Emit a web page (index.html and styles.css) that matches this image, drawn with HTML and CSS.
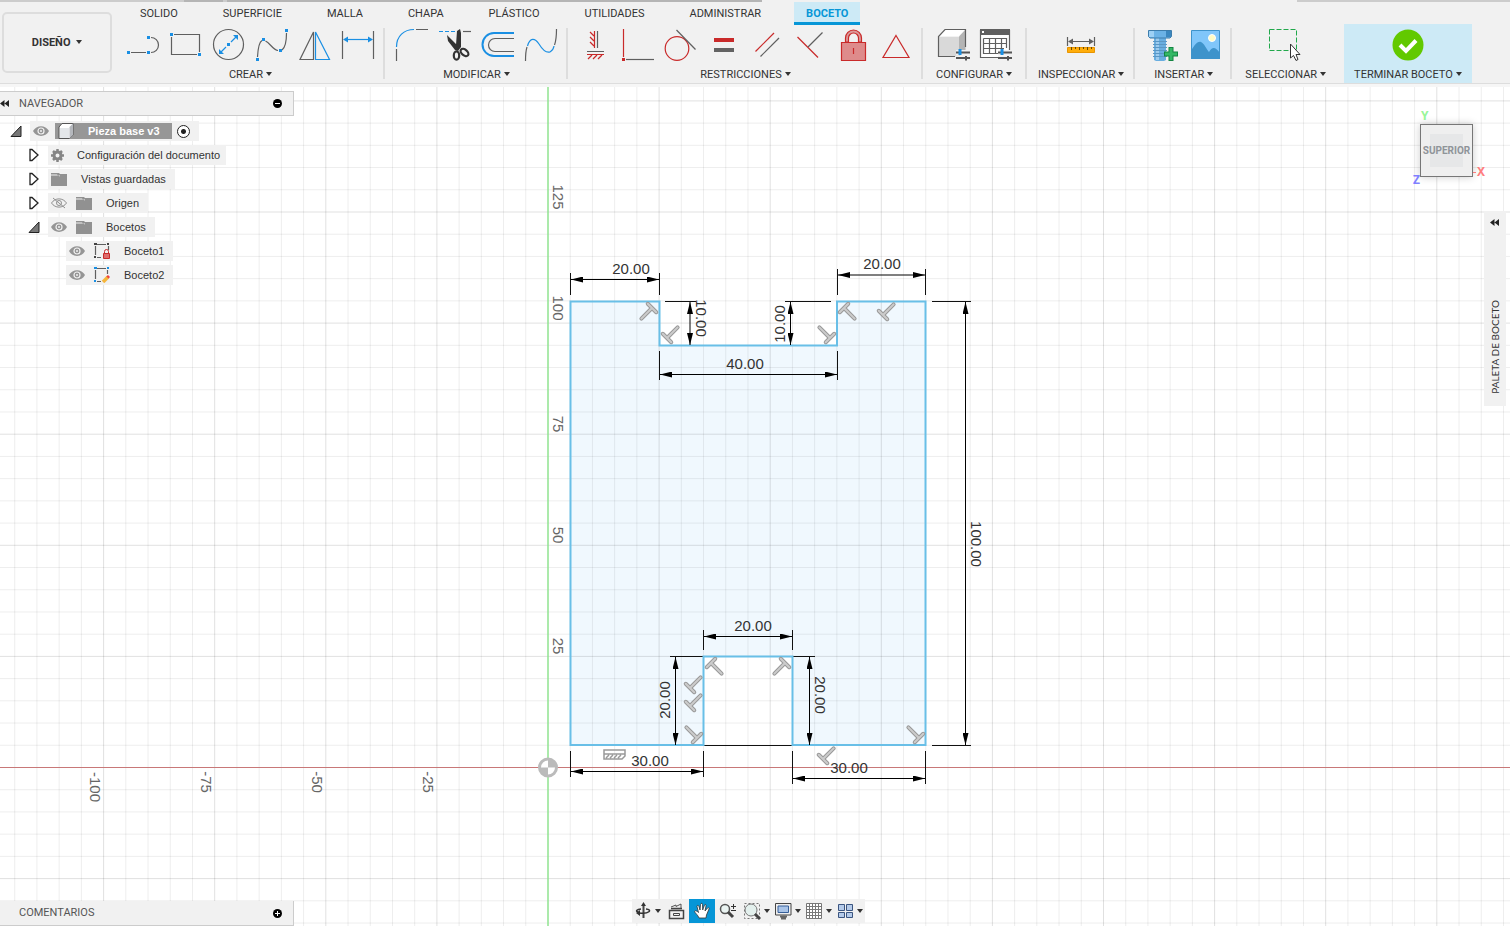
FILE: index.html
```html
<!DOCTYPE html>
<html lang="es">
<head>
<meta charset="utf-8">
<title>Pieza base v3</title>
<link rel="stylesheet" href="styles.css">
</head>
<body>
<svg class="canvas" role="img" aria-label="Boceto2">
  <defs>
    <marker id="arrow" markerUnits="userSpaceOnUse" markerWidth="12" markerHeight="6" refX="12" refY="3" orient="auto-start-reverse"><path d="M0 0L12 3L0 6Z"/></marker>
    <g id="perp">
      <path class="perp-edge" d="M-6 0H6M0 0V15"/>
      <path class="perp-core" d="M-6 0H6M0 0V15"/>
    </g>
  </defs>
  <path class="profile-fill" d="M570 301H659V345H837V301H926V745H792V656H704V745H570Z"/>
  <path id="grid-minor" class="grid-minor"/>
  <path id="grid-major" class="grid-major"/>
  <path id="axis-x" class="axis-x"/>
  <path id="axis-y" class="axis-y"/>
  <g class="ruler">
    <text transform="translate(553 197) rotate(90)">125</text>
    <text transform="translate(553 308) rotate(90)">100</text>
    <text transform="translate(553 424) rotate(90)">75</text>
    <text transform="translate(553 535) rotate(90)">50</text>
    <text transform="translate(553 646) rotate(90)">25</text>
    <text transform="translate(90 787) rotate(90)">-100</text>
    <text transform="translate(201 782) rotate(90)">-75</text>
    <text transform="translate(312 782) rotate(90)">-50</text>
    <text transform="translate(423 782) rotate(90)">-25</text>
  </g>
  <g class="origin">
    <circle cx="548" cy="767.500" r="8.500"/>
    <path d="M548 767.500V759a8.500 8.500 0 0 1 8.500 8.500ZM548 767.500V776a8.500 8.500 0 0 1-8.500-8.500Z"/>
  </g>
  <g class="dim-ext">
    <path d="M570.500 273V295M659.500 273V295M837.500 269V295M925.500 269V295M659.500 351V380M837.500 351V380"/>
    <path d="M665 301.500H696M785 301.500H831M932 301.500H971M932 745.500H971"/>
    <path d="M703.500 630V650M792.500 630V650M670 656.500H703M793 656.500H815M704 745.500H792"/>
    <path d="M570.500 751V777M703.500 751V777M792.500 751V784M925.500 751V784"/>
  </g>
  <path class="profile-line" d="M570.500 301.500H659.500V345.500H837V301.500H925.500V745H792.500V656.500H703.500V745H570.500Z"/>
  <g class="dim-line">
    <path d="M571 279.500H659"/><path d="M838 275H925"/><path d="M660 374.500H837"/>
    <path d="M690 302V345"/><path d="M790.500 302V345"/><path d="M965.500 302V745"/>
    <path d="M704 636.500H792"/><path d="M675.500 657V745"/><path d="M809.500 657V745"/>
    <path d="M571 771.500H703"/><path d="M793 778.500H925"/>
  </g>
  <g>
    <use href="#perp" transform="translate(652 308) rotate(45)"/>
    <use href="#perp" transform="translate(667 338) rotate(225)"/>
    <use href="#perp" transform="translate(830 338) rotate(135)"/>
    <use href="#perp" transform="translate(844 308) rotate(-45)"/>
    <use href="#perp" transform="translate(883 315) rotate(225)"/>
    <use href="#perp" transform="translate(711 663) rotate(-45)"/>
    <use href="#perp" transform="translate(690 688) rotate(225)"/>
    <use href="#perp" transform="translate(690 706) rotate(225)"/>
    <use href="#perp" transform="translate(697 738) rotate(135)"/>
    <use href="#perp" transform="translate(785 663) rotate(45)"/>
    <use href="#perp" transform="translate(919 738) rotate(135)"/>
    <use href="#perp" transform="translate(823 759) rotate(225)"/>
    <path class="horiz" d="M604 750H625V754H604ZM604 754V759H622L625 756V754M606 758l3-3M610 758l3-3M614 758l3-3M618 758l3-3"/>
  </g>
  <g class="dim-text">
    <text x="631" y="274">20.00</text>
    <text x="882" y="269">20.00</text>
    <text x="745" y="369">40.00</text>
    <text transform="translate(696 318) rotate(90)">10.00</text>
    <text transform="translate(785 324) rotate(-90)">10.00</text>
    <text transform="translate(971 544) rotate(90)">100.00</text>
    <text x="753" y="631">20.00</text>
    <text transform="translate(670 700) rotate(-90)">20.00</text>
    <text transform="translate(815 695) rotate(90)">20.00</text>
    <text x="650" y="766">30.00</text>
    <text x="849" y="773">30.00</text>
  </g>
</svg>

<header class="ribbon">
  <button class="workspace-switch">DISEÑO <i class="caret"></i></button>
  <div class="ribbon-body">
    <nav class="tabs">
      <button class="tab">SOLIDO</button>
      <button class="tab">SUPERFICIE</button>
      <button class="tab">MALLA</button>
      <button class="tab">CHAPA</button>
      <button class="tab">PLÁSTICO</button>
      <button class="tab">UTILIDADES</button>
      <button class="tab">ADMINISTRAR</button>
      <button class="tab tab-active">BOCETO</button>
    </nav>
    <div class="groups">
      <section class="group">
        <div class="tools">
          <button class="tool" aria-label="Línea"><svg viewBox="127 29 32 32"><path class="g" d="M131 52.500H146M151 37.500a7.500 7.500 0 0 1 0 15"/><path class="bf" d="M127 51h3v3h-3zM147 51h3v3h-3zM147 36h3v3h-3z"/></svg></button>
          <button class="tool" aria-label="Rectángulo"><svg viewBox="170 29 32 32"><path class="g" d="M174 34.500H199.500V52M171.500 37V54.500H197"/><path class="bf" d="M170 33h3v3h-3zM198 53h3v3h-3z"/></svg></button>
          <button class="tool" aria-label="Círculo"><svg viewBox="213 29 32 32"><circle class="g" cx="228.500" cy="44.500" r="15"/><path class="b" d="M221 52L226 47M231 42L236 37"/><path class="bf" d="M227 43h3v3h-3zM219 54v-5l5 5zM238 35v5l-5-5z"/></svg></button>
          <button class="tool" aria-label="Spline"><svg viewBox="256 29 32 32"><path class="g" d="M257.500 57C258 48 259 42 262 40.500M265.500 41C270 43 273 50 278 50.500M282 50C286 47 286.500 38 286.500 33"/><path class="bf" d="M256 58h3v3h-3zM262 38h3v3h-3zM279 49h3v3h-3zM285 29h3v3h-3z"/></svg></button>
          <button class="tool" aria-label="Simetría"><svg viewBox="299 29 32 32"><path class="g" d="M313.500 32V59.500H300Z"/><path class="b" d="M315.500 32V59.500H329.500Z"/></svg></button>
          <button class="tool" aria-label="Cota de boceto"><svg viewBox="342 29 32 32"><path class="g" d="M342.500 31V59M373.500 31V59"/><path class="b" d="M345 39.500H371"/><path class="bf" d="M343 39.500l5-3v6zM373 39.500l-5-3v6z"/></svg></button>
        </div>
        <button class="group-label">CREAR<i class="caret"></i></button>
      </section>
      <section class="group">
        <div class="tools">
          <button class="tool" aria-label="Empalme"><svg viewBox="396 29 32 32"><path class="b" d="M396.500 47C396.500 36 404 29.500 414 29.500"/><path class="g" d="M396.500 49V61M416 29.500H428"/></svg></button>
          <button class="tool" aria-label="Recortar"><svg viewBox="439 29 32 32"><path class="b" d="M439 31.500H456" stroke-dasharray="4 2"/><path class="g" d="M463 31.500H471"/><path d="M457 31L460 29L461 33V47L458 51L456 45ZM447 35L460 48L458 51L455 50L448 41Z" fill="#333"/><g fill="none" stroke="#333" stroke-width="2.200"><ellipse cx="456.500" cy="55.500" rx="2.700" ry="4.200"/><ellipse cx="464.500" cy="52.500" rx="4.500" ry="2.800" transform="rotate(40 464.500 52.500)"/></g></svg></button>
          <button class="tool" aria-label="Desfase"><svg viewBox="482 29 32 32"><path class="b b-wide" d="M514 33H494a11.500 11.500 0 0 0 0 23H514"/><path class="g" d="M514 38.500H495a6.500 6.500 0 0 0 0 13H514"/></svg></button>
          <button class="tool" aria-label="Curva de unión"><svg viewBox="525 29 32 32"><path class="g" d="M525.500 61C525.500 54 526 50 527 47M554.500 45C556 41 556.500 36 556.500 29"/><path class="b" d="M527.500 46C530 37 535 38 539 44C542 49 546 53 550 52C552 51 553.500 49 554 46"/></svg></button>
        </div>
        <button class="group-label">MODIFICAR<i class="caret"></i></button>
      </section>
      <section class="group">
        <div class="tools">
          <button class="tool" aria-label="Horizontal/Vertical"><svg viewBox="578 29 32 32"><path class="g" d="M596.500 31V48M586 51.500H603"/><path class="r" d="M593.500 31V48M589 32l4 4M589 37l4 4M589 42l4 4M586 54.500H603M587 59l4-4M592 59l4-4M597 59l4-4"/></svg></button>
          <button class="tool" aria-label="Coincidente"><svg viewBox="622 29 32 32"><path class="r" d="M623.500 29V57"/><path class="g" d="M626 59.500H654"/><path fill="#c92a2a" d="M622 58h3v3h-3z"/></svg></button>
          <button class="tool" aria-label="Tangente"><svg viewBox="665 29 32 32"><circle class="r" cx="677" cy="48.500" r="11.800"/><path class="g" d="M676.500 30L695.500 49.500"/></svg></button>
          <button class="tool" aria-label="Igual"><svg viewBox="708 29 32 32"><path fill="#c92a2a" d="M714 38h20v4h-20z"/><path fill="#636363" d="M714 48h20v4h-20z"/></svg></button>
          <button class="tool" aria-label="Paralelo"><svg viewBox="751 29 32 32"><path class="r" d="M755.500 51.500L774 33"/><path class="g" d="M760.500 56.500L779 38"/></svg></button>
          <button class="tool" aria-label="Perpendicular"><svg viewBox="794 29 32 32"><path class="r" d="M797.500 37L818 57.500"/><path class="g" d="M808 47L822.500 32.500"/></svg></button>
          <button class="tool" aria-label="Fijar"><svg viewBox="836 29 32 32"><path class="r lock-shackle" d="M844.500 42V38a8 8 0 0 1 16 0V42h-3V38a5 5 0 0 0-10 0V42Z"/><path class="r lock-body" d="M840.500 42.500H864.500V60.500H840.500Z"/><path class="r" d="M852.500 48V54"/></svg></button>
          <button class="tool" aria-label="Punto medio"><svg viewBox="880 29 32 32"><path class="r" d="M896 35.500L909 57.500H883Z"/></svg></button>
        </div>
        <button class="group-label">RESTRICCIONES<i class="caret"></i></button>
      </section>
      <section class="group group-wide">
        <div class="tools">
          <button class="tool" aria-label="Configurar modelo"><svg viewBox="936 29 32 32"><path d="M937.500 36.500H958V56.500H937.500Z" fill="#d9d9d9"/><path d="M937.500 36.500L944 29.500H964.500L958 36.500Z" fill="#fff"/><path d="M958 36.500L964.500 29.500V50L958 56.500Z" fill="#b4b4b4"/><path class="g" d="M964.500 47V29.500H944L937.500 36.500V56.500H954"/><path d="M955 52.500H969M955 58H969" stroke="#f1f1f1" stroke-width="5"/><path d="M955 52.500H969M955 58H969M965 56V60.500" stroke="#555" stroke-width="2"/><path d="M959 49V55" stroke="#1a8fe3" stroke-width="3"/></svg></button>
          <button class="tool" aria-label="Tabla de configuración"><svg viewBox="980 29 32 32"><path fill="#fff" d="M981 30H1009V58H981Z"/><path class="g" d="M1009.500 50V30M980.500 30V57.500H1000"/><path fill="#5f5f5f" d="M980 29H1010V35H980Z"/><path fill="#fff" d="M982 31h2v2h-2z"/><path class="g" d="M983.500 38.500H1006.500V48M983.500 38.500V53.500H998M983.500 43.500H1006M983.500 48.500H1004M989.500 38V53M995.500 38V53M1001.500 38V48"/><path d="M998 52.500H1012M998 58H1012" stroke="#f1f1f1" stroke-width="5"/><path d="M998 52.500H1012M998 58H1012M1008 56V60.500" stroke="#555" stroke-width="2"/><path d="M1002 49V55" stroke="#1a8fe3" stroke-width="3"/></svg></button>
        </div>
        <button class="group-label">CONFIGURAR<i class="caret"></i></button>
      </section>
      <section class="group">
        <div class="tools">
          <button class="tool" aria-label="Medir"><svg viewBox="1065 29 32 32"><path class="g" d="M1067.500 37V46M1094.500 37V46M1070 41.500H1092"/><path fill="#5f5f5f" d="M1068 41.500l5-3v6zM1094 41.500l-5-3v6z"/><path d="M1067.500 47.500H1094.500V52.500H1067.500Z" fill="#ffad0a" stroke="#e89500"/><path stroke="#6b4a00" d="M1071.500 47v3M1075.500 47v2M1079.500 47v3M1083.500 47v2M1087.500 47v3M1091.500 47v2"/></svg></button>
        </div>
        <button class="group-label">INSPECCIONAR<i class="caret"></i></button>
      </section>
      <section class="group">
        <div class="tools">
          <button class="tool" aria-label="Insertar componente"><svg viewBox="1147 29 32 32"><path fill="#69aee0" d="M1155 38H1167V60L1165 61H1157L1155 60Z"/><path fill="#9dcbee" d="M1157 38h3v22h-3z"/><path d="M1154 41.500H1168M1154 44.500H1168M1154 47.500H1168M1154 50.500H1168M1154 53.500H1168M1154 56.500H1168" stroke="#5b97c4"/><path d="M1149.500 30.500H1172.500V36.500L1171 38H1151L1149.500 36.500Z" fill="#6bb2e6" stroke="#3d7dac"/><path fill="#9dd0f5" d="M1150 31h5v6h-5z"/><path fill="#3b87bf" d="M1167 31h5v6h-5z"/><path d="M1172 47V61M1165 54H1179" stroke="#138542" stroke-width="5"/><path d="M1172 48V60M1166 54H1178" stroke="#35b866" stroke-width="3"/></svg></button>
          <button class="tool" aria-label="Insertar imagen"><svg viewBox="1189 29 32 32"><path d="M1191.500 30.500H1219.500V58.500H1191.500Z" fill="#80c6fa" stroke="#3e93cb"/><path d="M1191 51C1195 44 1198 41 1201 42C1204 43 1207 50 1209 52C1212 47 1215 46 1220 53V59H1191Z" fill="#3e93cb"/><circle cx="1212" cy="38" r="3.500" fill="#fffbc4" stroke="#fff"/></svg></button>
        </div>
        <button class="group-label">INSERTAR<i class="caret"></i></button>
      </section>
      <section class="group group-wide group-last">
        <div class="tools">
          <button class="tool" aria-label="Seleccionar"><svg viewBox="1272 29 32 32"><path d="M1271.500 29.500H1298.500V50.500H1271.500Z" fill="none" stroke="#21a84b" stroke-dasharray="5 2"/><path d="M1292.500 44V58L1295.500 55.500L1298 60.500L1300 59.500L1298 54.500H1302Z" fill="#fff" stroke="#333"/></svg></button>
        </div>
        <button class="group-label">SELECCIONAR<i class="caret"></i></button>
      </section>
      <section class="group group-finish">
        <div class="tools">
          <button class="tool" aria-label="Terminar boceto"><svg viewBox="1393 29 32 32"><circle cx="1409" cy="45" r="15.500" fill="#62c900"/><path d="M1401 45L1407 51L1417 40.500" fill="none" stroke="#fff" stroke-width="4"/></svg></button>
        </div>
        <button class="group-label">TERMINAR BOCETO<i class="caret"></i></button>
      </section>
    </div>
  </div>
</header>

<main class="workspace">
  <aside class="side">
    <section>
      <h2 class="panel-bar">
        <svg class="rewind" viewBox="0 0 9 7"><path d="M4.500 0V7L0 3.500ZM9 0V7L4.500 3.500Z"/></svg>
        <span>NAVEGADOR</span>
        <button class="round" aria-label="Ocultar"><svg viewBox="0 0 9 9"><circle cx="4.500" cy="4.500" r="4.500"/><path stroke="#fff" d="M2 4.500H7"/></svg></button>
      </h2>
      <ul class="tree">
        <li class="row"><button class="toggle" aria-label="Contraer"><svg viewBox="0 0 12 14"><path class="open" d="M11 2V12.500H1Z"/></svg></button>
          <div class="chip chip-root"><svg class="ico" viewBox="0 0 16 16"><use href="#eye"/></svg>
            <span class="root-name"><svg class="ico" viewBox="0 0 16 16"><path d="M1 4L4 0.500H15V12L11.500 15.500H1Z" fill="#fff" stroke="#555"/><path d="M11.500 4L15 0.500V12L11.500 15.500Z" fill="#b5b8bd"/><path d="M2 5H11V15H2Z" fill="#e4e7ea"/></svg>Pieza base v3</span>
            <input class="activate" type="radio" checked aria-label="Activar componente"></div></li>
        <li class="row level-1"><button class="toggle" aria-label="Expandir"><svg viewBox="0 0 12 14"><path class="closed" d="M2 1.500H4L10 7L4 12.500H2Z"/></svg></button>
          <div class="chip chip-doc"><svg class="ico ico-gear" viewBox="0 0 13 13"><circle cx="6.500" cy="6.500" r="3.500" fill="none" stroke="#858585" stroke-width="3"/><path stroke="#858585" stroke-width="2.500" d="M6.500 0V3M6.500 10V13M0 6.500H3M10 6.500H13M2 2L4 4M9 9L11 11M11 2L9 4M4 9L2 11"/></svg>Configuración del documento</div></li>
        <li class="row level-1"><button class="toggle" aria-label="Expandir"><svg viewBox="0 0 12 14"><path class="closed" d="M2 1.500H4L10 7L4 12.500H2Z"/></svg></button>
          <div class="chip"><svg class="ico" viewBox="0 0 16 16"><use href="#folder"/></svg>Vistas guardadas</div></li>
        <li class="row level-1"><button class="toggle" aria-label="Expandir"><svg viewBox="0 0 12 14"><path class="closed" d="M2 1.500H4L10 7L4 12.500H2Z"/></svg></button>
          <div class="chip"><svg class="ico ico-first" viewBox="0 0 16 16"><path d="M0.500 8C4 2.500 12 2.500 15.500 8C12 13.500 4 13.500 0.500 8ZM2 3L14 13" fill="none" stroke="#909090"/><circle cx="8" cy="8" r="2.500" fill="none" stroke="#909090"/></svg><svg class="ico" viewBox="0 0 16 16"><use href="#folder"/></svg>Origen</div></li>
        <li class="row level-1"><button class="toggle" aria-label="Contraer"><svg viewBox="0 0 12 14"><path class="open" d="M11 2V12.500H1Z"/></svg></button>
          <div class="chip"><svg class="ico ico-first" viewBox="0 0 16 16"><use href="#eye"/></svg><svg class="ico" viewBox="0 0 16 16"><use href="#folder"/></svg>Bocetos</div></li>
        <li class="row level-2"><div class="chip"><svg class="ico ico-first" viewBox="0 0 16 16"><use href="#eye"/></svg><svg class="ico" viewBox="0 0 16 16"><path class="g" d="M1.500 3V12M3 1.500H12M14.500 3V7M3 14.500H7"/><path fill="#444" d="M0 0h3v2H0zM13 0h2v2h-2zM0 13h2v2H0z"/><path d="M10.500 10V8.500a2 2 0 0 1 4 0V10" fill="none" stroke="#c92a2a"/><path d="M9.500 10.500h6v5h-6z" fill="#de6b6b" stroke="#c92a2a"/></svg>Boceto1</div></li>
        <li class="row level-2"><div class="chip"><svg class="ico ico-first" viewBox="0 0 16 16"><use href="#eye"/></svg><svg class="ico" viewBox="0 0 16 16"><path class="g" d="M1.500 3V12M3 1.500H12M13.500 3V7M3 14.500H7"/><path class="bf" d="M0 0h3v2H0zM13 0h2v2h-2zM0 13h2v2H0z"/><path d="M9 15L14 10" stroke="#f5b53c" stroke-width="3.500"/><path d="M13.500 10.500L15 9" stroke="#ef4040" stroke-width="3"/></svg>Boceto2</div></li>
      </ul>
    </section>
    <h2 class="panel-bar comments">
      <span>COMENTARIOS</span>
      <button class="round" aria-label="Añadir"><svg viewBox="0 0 9 9"><circle cx="4.500" cy="4.500" r="4.500"/><path stroke="#fff" d="M2 4.500H7M4.500 2V7"/></svg></button>
    </h2>
  </aside>

  <div class="viewcube">
    <button class="cube-face">SUPERIOR</button>
    <span class="axis axis-label-y">Y</span><span class="axis axis-label-z">Z</span><span class="axis axis-label-x">X</span>
  </div>

  <button class="palette">
    <svg class="rewind" viewBox="0 0 9 7"><path d="M4.500 0V7L0 3.500ZM9 0V7L4.500 3.500Z"/></svg>
    <span>PALETA DE BOCETO</span>
  </button>

  <div class="navbar">
    <button class="nav nav-menu" aria-label="Orbitar"><svg viewBox="0 0 18 18"><path d="M9.500 3V16" stroke="#444" stroke-width="2"/><path d="M9.500 0L12 4H7ZM2 11L6 8V14Z" fill="#333"/><path d="M5 11C15 12.500 19 7.500 12 7M7 7C3 7.500 1 9 4 10" fill="none" stroke="#333" stroke-width="1.500"/></svg><i class="caret"></i></button>
    <button class="nav" aria-label="Mirar a"><svg viewBox="0 0 18 18"><path d="M2.500 8.500H16.500V16.500H2.500ZM4 6.500H15" fill="none" stroke="#444" stroke-width="1.500"/><path d="M4 5L9 3L9 4.500L14 2V6" fill="none" stroke="#555"/><path d="M6.500 11.500H12.500V13.500H6.500Z" fill="none" stroke="#444"/></svg></button>
    <button class="nav nav-active" aria-label="Encuadre"><svg viewBox="0 0 18 18"><path d="M6 16C5 13 2 11 1.500 9.500C2 8 4 9 5.500 10.500L4 4.500C4 3 5.500 3 6 4.500L7 8L7.500 2.500C8 1 9.500 1 9.500 2.500L9.700 8L11.500 3C12 2 13.500 2.500 13 4L12 9L14.500 6C15.500 5 16.500 6 16 7L13.500 13L13 16Z" fill="#fff" stroke="#333" stroke-width="0.800"/></svg></button>
    <button class="nav" aria-label="Zoom"><svg viewBox="0 0 18 18"><circle cx="6" cy="7" r="4.500" fill="#eaf4f2" stroke="#555" stroke-width="1.500"/><path d="M9 10L14 15" stroke="#444" stroke-width="3"/><path d="M14.500 2V7M12 4.500H17M12 8.500H17" stroke="#333"/></svg></button>
    <button class="nav nav-menu" aria-label="Zoom de ventana"><svg viewBox="0 0 18 18"><path d="M1.500 1.500H16.500V16.500H1.500Z" fill="none" stroke="#777" stroke-dasharray="2 2"/><circle cx="8" cy="8" r="6" fill="#e3f0ed" stroke="#777"/><path d="M12 12L17 17" stroke="#444" stroke-width="3"/></svg><i class="caret"></i></button>
    <button class="nav nav-menu" aria-label="Visualización"><svg viewBox="0 0 18 18"><path d="M1.500 1.500H17V13H1.500Z" fill="#eee" stroke="#444"/><path d="M4 4H14.500V10.500H4Z" fill="#a9c4e8" stroke="#365f99"/><path d="M6 14.500H13M7 16.500H12" stroke="#666" stroke-width="2"/></svg><i class="caret"></i></button>
    <button class="nav nav-menu" aria-label="Rejilla"><svg viewBox="0 0 18 18"><path d="M1.500 1.500H16.500V16.500H1.500ZM1.500 4.500H16M1.500 7.500H16M1.500 10.500H16M1.500 13.500H16M4.500 1.500V16M7.500 1.500V16M10.500 1.500V16M13.500 1.500V16" fill="#fff" stroke="#777"/></svg><i class="caret"></i></button>
    <button class="nav nav-menu" aria-label="Ventanas"><svg viewBox="0 0 18 18"><path d="M2.500 2.500H8.500V8.500H2.500ZM10.500 2.500H16.500V8.500H10.500ZM2.500 10.500H8.500V15.500H2.500ZM10.500 10.500H16.500V15.500H10.500Z" fill="#b5cbea" stroke="#3b5580"/></svg><i class="caret"></i></button>
  </div>
</main>

<svg class="shared" aria-hidden="true">
  <defs>
    <g id="eye"><path d="M0 8C3.500 1.500 12.500 1.500 16 8C12.500 14.500 3.500 14.500 0 8Z" fill="#959595"/><circle cx="8" cy="8" r="3" fill="none" stroke="#f1f1f1" stroke-width="1.200"/><circle cx="8" cy="8" r="1" fill="#f1f1f1"/></g>
    <path id="folder" d="M0 2H8L9 3H16V15H0ZM0 4.500H7L9 5.500V4.500H7L6 3.500H0Z" fill="#919191" fill-rule="evenodd"/>
  </defs>
</svg>
<script src="grid.js"></script>
</body>
</html>
```

FILE: styles.css
```css
* {
  box-sizing: border-box;
}

body {
  margin: 0;
  height: 100vh;
  display: flex;
  flex-direction: column;
  position: relative;
  overflow: hidden;
  background: #fff;
  color: #333;
  font: 11px/14px "Liberation Sans", Arial, sans-serif;
}

button {
  border: 0;
  padding: 0;
  background: none;
  color: inherit;
  font: inherit;
}

svg {
  display: block;
  flex: none;
}

.shared {
  position: absolute;
  width: 0;
  height: 0;
}

.caret {
  display: inline-block;
  border: solid transparent;
  border-width: 4px 3px 0;
  border-top-color: #333;
  margin-left: 3px;
  vertical-align: 2px;
}

/* Sketch canvas */
.canvas {
  position: absolute;
  inset: 0;
  width: 100%;
  height: 100%;
}

.grid-minor, .grid-major, .axis-x, .axis-y { fill: none; }
.grid-minor { stroke: rgba(0, 0, 0, 0.07); }
.grid-major { stroke: rgba(0, 0, 0, 0.12); }
.axis-x { stroke: #c87878; }
.axis-y { stroke: #8fe38f; stroke-width: 1.5px; }
.profile-fill { fill: #f0f8fe; }
.profile-line { fill: none; stroke: #69bfe7; stroke-width: 2px; }
.ruler text, .dim-text text { font-size: 15px; text-anchor: middle; }
.ruler { fill: #666; }
.dim-text { fill: #333; }
.dim-ext { fill: none; stroke: #111; }
.dim-line path { stroke: #000; marker-start: url(#arrow); marker-end: url(#arrow); }
.origin circle { fill: #fff; stroke: #bbb; stroke-width: 3px; }
.origin path { fill: #bbb; }
.perp-edge { fill: none; stroke: #999; stroke-width: 4px; stroke-linecap: round; }
.perp-core { fill: none; stroke: #ccc; stroke-width: 2px; stroke-linecap: round; }
.horiz { fill: none; stroke: #999; stroke-width: 1.5px; }

/* Icon strokes */
.g { fill: none; stroke: #5f5f5f; stroke-width: 1.2px; }
.b { fill: none; stroke: #1a8fe3; stroke-width: 1.2px; }
.b-wide { stroke-width: 2px; }
.bf { fill: #1a8fe3; }
.r { fill: none; stroke: #c92a2a; stroke-width: 1.2px; }
.lock-shackle { fill: #dc9999; }
.lock-body { fill: #de8b8b; }

/* Ribbon */
.ribbon {
  position: relative;
  display: flex;
  flex: none;
  height: 87px;
  padding-top: 2px;
  background: linear-gradient(#f1f1f1 83px, #ddd 83px, #ddd 84px, #f6f6f6 84px);
}

.ribbon::before {
  content: "";
  position: absolute;
  inset: 0 0 auto;
  height: 2px;
  background: linear-gradient(90deg, #ccc 184px, #b5b5b5 184px, #b5b5b5 223px, #ccc 223px, #ccc 227px, #b5b5b5 227px, #b5b5b5 762px, transparent 762px, transparent calc(100% - 213px), #ccc calc(100% - 213px));
}

.workspace-switch {
  width: 110px;
  height: 61px;
  margin: 10px 4px 0 2px;
  border: 2px solid #ddd;
  border-radius: 5px;
  font-weight: bold;
  font-family: Roboto, sans-serif;
}

.tabs {
  display: flex;
  gap: 21px;
  padding-left: 12px;
  font-family: Roboto, sans-serif;
}

.tab {
  padding: 6px 12px 2px;
  height: 23px;
  line-height: 12px;
  border-bottom: 3px solid transparent;
}

.tab-active {
  background: #cdeaf6;
  border-color: #0696d7;
  color: #0696d7;
  font-weight: bold;
}

.groups {
  display: flex;
}

.group {
  display: flex;
  flex-direction: column;
  align-items: center;
  height: 51px;
  margin-top: 3px;
  padding: 1px 9px 0 11px;
  border-right: 2px solid #ddd;
  font-family: Roboto, sans-serif;
}

.group-wide { padding-inline: 13px; }
.group-last { border: 0; margin-right: 5px; }

.group-finish {
  height: 59px;
  margin-top: -1px;
  padding: 5px 10px 0;
  border: 0;
  background: #cdeaf6;
}

.tools {
  display: flex;
  gap: 11px;
}

.tool svg {
  width: 32px;
  height: 32px;
  overflow: visible;
}

.group-label {
  margin-top: 7px;
  white-space: nowrap;
}

/* Workspace overlays */
.workspace {
  position: relative;
  display: flex;
  flex: 1;
  min-height: 0;
}

.side {
  display: flex;
  flex-direction: column;
  justify-content: space-between;
  width: 294px;
  padding-top: 4px;
}

.panel-bar {
  display: flex;
  align-items: center;
  height: 25px;
  margin: 0;
  padding-right: 11px;
  background: #f1f1f1;
  border: 1px solid #ccc;
  border-left: 0;
  color: #555;
  font: 11px/14px Roboto, sans-serif;
}

.comments {
  padding-left: 19px;
  border-top: 0;
}

.rewind {
  width: 9px;
  height: 7px;
  fill: #222;
}

.panel-bar .rewind { margin-right: 10px; }
.round { margin-left: auto; }
.round svg { width: 9px; height: 9px; }

.tree {
  display: flex;
  flex-direction: column;
  gap: 4px;
  margin: 5px 0 0;
  padding: 0;
  list-style: none;
}

.row {
  display: flex;
  height: 20px;
  padding-left: 10px;
}

.level-1 { padding-left: 28px; }
.level-2 { padding-left: 66px; }
.toggle { width: 20px; }
.toggle svg { width: 12px; height: 14px; }
.open { fill: #777; stroke: #222; }
.closed { fill: #fff; stroke: #222; stroke-width: 1.3px; }

.chip {
  display: flex;
  align-items: center;
  padding: 0 9px 0 3px;
  background: #f1f1f1;
}

.chip-doc { padding-right: 6px; }
.ico { width: 16px; height: 16px; margin-right: 14px; }
.ico-first { margin-right: 9px; }
.ico-gear { width: 13px; height: 13px; margin-right: 13px; }
.chip-root > .ico { margin-right: 6px; }

.root-name {
  display: flex;
  align-items: center;
  height: 16px;
  padding: 0 12px 0 3px;
  background: #979797;
  color: #fff;
  font-weight: bold;
}

.activate {
  appearance: none;
  width: 13px;
  height: 13px;
  margin: 0 0 0 5px;
  border: 1px solid #222;
  border-radius: 50%;
  background: radial-gradient(#222 2px, #fff 3px);
}

.viewcube {
  position: absolute;
  top: 37px;
  right: 37px;
}

.cube-face {
  width: 53px;
  height: 53px;
  border: 1px solid #777;
  background: linear-gradient(#e6e7e8, #e6e7e8) center / 33px 33px no-repeat #efefef;
  box-shadow: 0 0 8px rgba(0, 0, 0, 0.2);
  color: #8f9499;
  font: bold 10px/14px Roboto, sans-serif;
}

.axis {
  position: absolute;
  font: 12px/12px "Noto Sans", sans-serif;
  font-weight: bold;
}

.axis-label-y { left: 1px; top: -14px; color: #98f598; }
.axis-label-z { left: -7px; top: 50px; color: #8080ff; }
.axis-label-x { right: -12px; top: 42px; color: #ff7d7d; }

.axis-label-x::before {
  content: "";
  position: absolute;
  right: 9px;
  top: 6px;
  width: 3px;
  height: 1px;
  background: #ff7d7d;
}

.palette {
  position: absolute;
  top: 124px;
  right: 4px;
  display: flex;
  flex-direction: column;
  align-items: center;
  justify-content: space-between;
  width: 22px;
  height: 195px;
  padding: 8px 1px 12px 0;
  background: #f1f1f1;
}

.palette span {
  writing-mode: vertical-rl;
  transform: rotate(180deg);
  font: 10px/14px Lato, sans-serif;
}

.navbar {
  position: absolute;
  left: calc(50% - 123px);
  bottom: 3px;
  display: flex;
  height: 24px;
  background: #f1f1f1;
}

.nav {
  display: flex;
  align-items: center;
  justify-content: center;
  width: 26px;
}

.nav-menu { width: 31px; }
.nav-active { background: #0696d7; }
.nav svg { width: 18px; height: 18px; }
```

FILE: grid.js
```js
// Draws the modelling grid and axes across the whole window.
const origin = { x: 548, y: 767.5 };
const step = 22.22;

function lines(start, limit, make) {
  const out = { minor: "", major: "" };
  for (let i = -Math.floor(start / step); start + i * step < limit; i++) {
    if (i === 0) continue;
    out[i % 5 === 0 ? "major" : "minor"] += make((start + i * step).toFixed(2));
  }
  return out;
}

function drawGrid() {
  const w = window.innerWidth;
  const h = window.innerHeight;
  const cols = lines(origin.x, w, (x) => `M${x} 0V${h}`);
  const rows = lines(origin.y, h, (y) => `M0 ${y}H${w}`);
  const set = (id, d) => document.getElementById(id).setAttribute("d", d);
  set("grid-minor", cols.minor + rows.minor);
  set("grid-major", cols.major + rows.major);
  set("axis-x", `M0 ${origin.y}H${w}`);
  set("axis-y", `M${origin.x} 0V${h}`);
}

window.addEventListener("resize", drawGrid);
drawGrid();
```
